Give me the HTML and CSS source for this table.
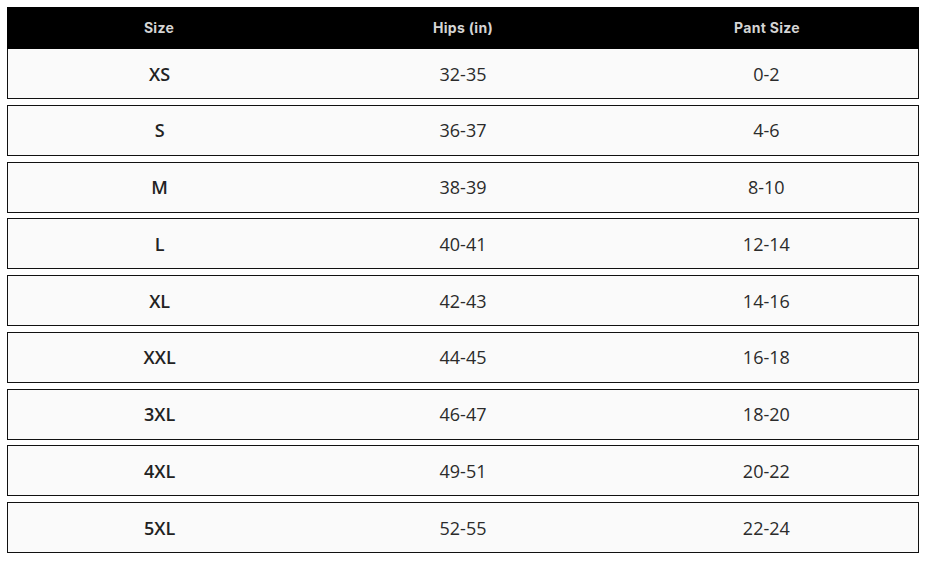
FILE: index.html
```html
<!DOCTYPE html>
<html>
<head>
<meta charset="utf-8">
<link rel="stylesheet" href="styles.css">
</head>
<body>
<div class="chart">
  <div class="row head">
    <div class="cell">Size</div>
    <div class="cell">Hips (in)</div>
    <div class="cell">Pant Size</div>
  </div>
  <div class="row first"><div class="cell size">XS</div><div class="cell">32-35</div><div class="cell">0-2</div></div>
  <div class="row"><div class="cell size">S</div><div class="cell">36-37</div><div class="cell">4-6</div></div>
  <div class="row"><div class="cell size">M</div><div class="cell">38-39</div><div class="cell">8-10</div></div>
  <div class="row"><div class="cell size">L</div><div class="cell">40-41</div><div class="cell">12-14</div></div>
  <div class="row"><div class="cell size">XL</div><div class="cell">42-43</div><div class="cell">14-16</div></div>
  <div class="row"><div class="cell size">XXL</div><div class="cell">44-45</div><div class="cell">16-18</div></div>
  <div class="row"><div class="cell size">3XL</div><div class="cell">46-47</div><div class="cell">18-20</div></div>
  <div class="row"><div class="cell size">4XL</div><div class="cell">49-51</div><div class="cell">20-22</div></div>
  <div class="row"><div class="cell size">5XL</div><div class="cell">52-55</div><div class="cell">22-24</div></div>
</div>
</body>
</html>
```
FILE: styles.css
```css
html, body {
  margin: 0;
  background: #ffffff;
}
body {
  padding: 7px 6px 0 7px;
  font-family: "Open Sans", "Liberation Sans", sans-serif;
  color: #2b2b2b;
}
.chart {
  width: 912px;
  display: flex;
  flex-direction: column;
  gap: 5.75px;
}
.row {
  display: grid;
  grid-template-columns: 1fr 1fr 1fr;
  height: 51px;
  box-sizing: border-box;
  border: 1px solid #111;
  background: #fafafa;
  align-items: center;
}
.row.head {
  height: 42px;
  background: #000;
  border: none;
}
.row.first {
  margin-top: -5.75px;
  border-top: none;
  height: 50px;
}
.cell {
  text-align: center;
  font-size: 18px;
  line-height: 24px;
}
.head .cell {
  font-family: Inter, "Open Sans", sans-serif;
  font-weight: 700;
  font-size: 14px;
  color: #d4d4d4;
  letter-spacing: 0.3px;
}
.cell.size {
  font-weight: 600;
  color: #222;
}
```
